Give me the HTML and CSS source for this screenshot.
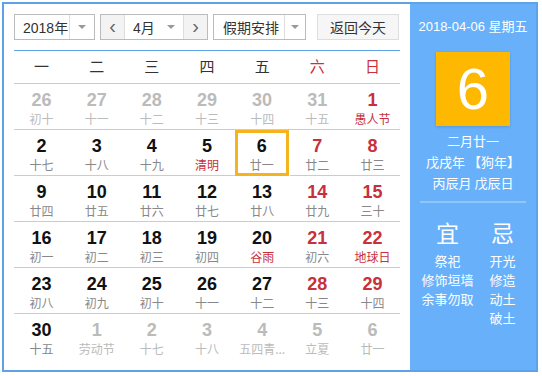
FILE: index.html
```html
<!DOCTYPE html>
<html lang="zh-CN">

<head>
    <meta charset="UTF-8">
    <title>万年历</title>
    <link rel="stylesheet" href="styles.css">
</head>

<body>
    <div class="calendar">
        <div class="main">
            <div class="toolbar">
                <div class="select year">
                    <span class="label">2018年</span>
                    <span class="arrow"></span>
                </div>
                <div class="month-group">
                    <span class="btn-nav">&lsaquo;</span>
                    <div class="select month">
                        <span class="label">4月</span>
                        <span class="arrow plain"></span>
                    </div>
                    <span class="btn-nav">&rsaquo;</span>
                </div>
                <div class="select holiday">
                    <span class="label">假期安排</span>
                    <span class="arrow"></span>
                </div>
                <button class="btn-today">返回今天</button>
            </div>

            <div class="week">
                <span>一</span><span>二</span><span>三</span><span>四</span><span>五</span>
                <span class="weekend">六</span><span class="weekend">日</span>
            </div>

            <div class="days">
                <div class="day other"><b>26</b><i>初十</i></div>
                <div class="day other"><b>27</b><i>十一</i></div>
                <div class="day other"><b>28</b><i>十二</i></div>
                <div class="day other"><b>29</b><i>十三</i></div>
                <div class="day other"><b>30</b><i>十四</i></div>
                <div class="day other"><b>31</b><i>十五</i></div>
                <div class="day weekend"><b>1</b><i class="fest">愚人节</i></div>

                <div class="day"><b>2</b><i>十七</i></div>
                <div class="day"><b>3</b><i>十八</i></div>
                <div class="day"><b>4</b><i>十九</i></div>
                <div class="day"><b>5</b><i class="fest">清明</i></div>
                <div class="day today"><b>6</b><i>廿一</i></div>
                <div class="day weekend"><b>7</b><i>廿二</i></div>
                <div class="day weekend"><b>8</b><i>廿三</i></div>

                <div class="day"><b>9</b><i>廿四</i></div>
                <div class="day"><b>10</b><i>廿五</i></div>
                <div class="day"><b>11</b><i>廿六</i></div>
                <div class="day"><b>12</b><i>廿七</i></div>
                <div class="day"><b>13</b><i>廿八</i></div>
                <div class="day weekend"><b>14</b><i>廿九</i></div>
                <div class="day weekend"><b>15</b><i>三十</i></div>

                <div class="day"><b>16</b><i>初一</i></div>
                <div class="day"><b>17</b><i>初二</i></div>
                <div class="day"><b>18</b><i>初三</i></div>
                <div class="day"><b>19</b><i>初四</i></div>
                <div class="day"><b>20</b><i class="fest">谷雨</i></div>
                <div class="day weekend"><b>21</b><i>初六</i></div>
                <div class="day weekend"><b>22</b><i class="fest">地球日</i></div>

                <div class="day"><b>23</b><i>初八</i></div>
                <div class="day"><b>24</b><i>初九</i></div>
                <div class="day"><b>25</b><i>初十</i></div>
                <div class="day"><b>26</b><i>十一</i></div>
                <div class="day"><b>27</b><i>十二</i></div>
                <div class="day weekend"><b>28</b><i>十三</i></div>
                <div class="day weekend"><b>29</b><i>十四</i></div>

                <div class="day last"><b>30</b><i>十五</i></div>
                <div class="day last other"><b>1</b><i>劳动节</i></div>
                <div class="day last other"><b>2</b><i>十七</i></div>
                <div class="day last other"><b>3</b><i>十八</i></div>
                <div class="day last other"><b>4</b><i>五四青...</i></div>
                <div class="day last other"><b>5</b><i>立夏</i></div>
                <div class="day last other"><b>6</b><i>廿一</i></div>
            </div>
        </div>

        <div class="side">
            <p class="side-date">2018-04-06 星期五</p>
            <div class="big-day">6</div>
            <div class="lunar">
                <p>二月廿一</p>
                <p>戊戌年 【狗年】</p>
                <p>丙辰月 戊辰日</p>
            </div>
            <hr class="side-line">
            <div class="yiji">
                <div class="col">
                    <h3>宜</h3>
                    <p>祭祀</p>
                    <p>修饰垣墙</p>
                    <p>余事勿取</p>
                </div>
                <div class="col">
                    <h3>忌</h3>
                    <p>开光</p>
                    <p>修造</p>
                    <p>动土</p>
                    <p>破土</p>
                </div>
            </div>
        </div>
    </div>
</body>

</html>
```

FILE: styles.css
```css
body {
    margin: 0;
    padding: 2px;
    font-family: "Liberation Sans", "Noto Sans CJK SC", sans-serif;
    background: #fff;
}

.calendar {
    width: 532px;
    height: 366px;
    border: 2px solid #5ea3ea;
    display: flex;
}

.main {
    width: 386px;
    padding: 10px 10px 0 10px;
}

/* toolbar */
.toolbar {
    display: flex;
    height: 26px;
    font-size: 14px;
    color: #333;
}

.select {
    display: flex;
    box-sizing: border-box;
    height: 26px;
    border: 1px solid #bbb;
    background: #fff;
    align-items: center;
    white-space: nowrap;
}

.select .label {
    flex: 1;
    padding-left: 8px;
}

.select .arrow {
    width: 24px;
    height: 24px;
    border-left: 1px solid #ddd;
    position: relative;
    flex: none;
}

.select .arrow.plain {
    border-left: none;
}

.select .arrow::after {
    content: "";
    position: absolute;
    left: 8px;
    top: 10px;
    border-left: 4px solid transparent;
    border-right: 4px solid transparent;
    border-top: 4px solid #999;
}

.year {
    width: 81px;
}

.month-group {
    display: flex;
    margin-left: 5px;
    width: 108px;
    box-sizing: border-box;
    border: 1px solid #bbb;
}

.month-group .select {
    border: none;
    height: 24px;
    flex: 1;
}

.btn-nav {
    width: 23px;
    text-align: center;
    line-height: 22px;
    font-size: 20px;
    color: #666;
    background: #f3f3f3;
    border-right: 1px solid #ddd;
}

.btn-nav:last-child {
    border-right: none;
    border-left: 1px solid #ddd;
}

.holiday {
    margin-left: 5px;
    width: 93px;
}

.holiday .label {
    padding-left: 9px;
}

.holiday .arrow {
    width: 20px;
}

.holiday .arrow::after {
    left: 6px;
}

.btn-today {
    margin-left: 11px;
    width: 82px;
    height: 26px;
    border: 1px solid #ddd;
    background: #f6f6f6;
    font-family: "Noto Sans CJK SC", sans-serif;
    font-size: 14px;
    color: #333;
    padding: 0;
}

/* week header */
.week {
    margin-top: 10px;
    border-top: 1px solid #5ea3ea;
    border-bottom: 1px solid #ccc;
    display: grid;
    grid-template-columns: repeat(7, 1fr);
    height: 32px;
    line-height: 32px;
    font-size: 15px;
    color: #333;
    text-align: center;
}

.week .weekend {
    color: #c8303c;
}

/* days */
.days {
    display: grid;
    grid-template-columns: repeat(7, 1fr);
}

.day {
    height: 46px;
    box-sizing: border-box;
    border-bottom: 1px solid #ccc;
    text-align: center;
    padding-top: 6px;
}

.day.last {
    border-bottom: none;
}

.day b {
    display: block;
    font-size: 18px;
    line-height: 20px;
    color: #111;
}

.day i {
    display: block;
    font-style: normal;
    font-size: 12px;
    line-height: 17px;
    color: #888;
    font-family: "Noto Sans CJK SC", sans-serif;
    white-space: nowrap;
}

.day.weekend b {
    color: #c8303c;
}

.day i.fest {
    color: #c8303c;
}

.day.other b,
.day.other i {
    color: #bbb;
}

.day.today {
    border: 3px solid #f5b41e;
    padding-top: 3px;
    margin: 0 1px 0 0;
}

/* side panel */
.side {
    flex: 1;
    background: #68b1fa;
    color: #fff;
    text-align: center;
    font-family: "Noto Sans CJK SC", sans-serif;
}

.side p {
    margin: 0;
}

.side-date {
    margin-top: 13px !important;
    font-family: "Liberation Sans", "Noto Sans CJK SC", sans-serif;
    font-size: 13px;
    line-height: 20px;
}

.big-day {
    width: 74px;
    height: 74px;
    margin: 15px auto 0;
    background: #ffb800;
    box-shadow: 0 1px 3px rgba(0, 0, 0, 0.15);
    font-family: "Liberation Sans", sans-serif;
    font-size: 58px;
    line-height: 74px;
}

.lunar {
    margin-top: 4px;
    font-size: 13px;
    line-height: 21px;
}

.side-line {
    margin: 8px 10px 0;
    border: none;
    border-top: 2px solid #90c6fb;
}

.yiji {
    display: flex;
    padding: 0 6px 0 10px;
}

.yiji .col {
    flex: 1;
}

.yiji h3 {
    margin: 14px 0 4px;
    font-size: 23px;
    font-weight: normal;
    line-height: 30px;
}

.yiji p {
    font-size: 13px;
    line-height: 19px;
    white-space: nowrap;
}
```
